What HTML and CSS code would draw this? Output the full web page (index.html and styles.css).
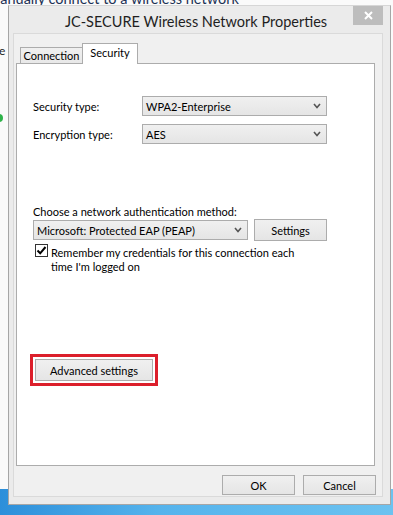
FILE: index.html
```html
<!DOCTYPE html>
<html lang="en">
<head>
    <meta charset="UTF-8">
    <title>JC-SECURE Wireless Network Properties</title>
    <link rel="stylesheet" href="styles.css">
</head>
<body>
    <!-- Window behind the dialog -->
    <div class="backwin">
        <p class="back-title">Manually connect to a wireless network</p>
        <p class="back-label">e</p>
        <span class="back-dot"></span>
    </div>

    <!-- Properties dialog -->
    <div class="dialog">
        <div class="titlebar">
            <span class="title">JC-SECURE Wireless Network Properties</span>
            <span class="close">
                <svg width="9" height="9" viewBox="0 0 9 9"><path d="M1 1 L8 8 M8 1 L1 8" stroke="#fff" stroke-width="2" fill="none"/></svg>
            </span>
        </div>

        <div class="client">
            <div class="tabs">
                <div class="tab">Connection</div>
                <div class="tab active">Security</div>
            </div>

            <div class="panel">
                <div class="field">
                    <span class="field-label">Security type:</span>
                    <div class="combo">
                        <span>WPA2-Enterprise</span>
                        <svg class="chev" width="8" height="6" viewBox="0 0 8 6"><path d="M1 1 L4 4.5 L7 1" stroke="#555" stroke-width="1.6" fill="none"/></svg>
                    </div>
                </div>
                <div class="field">
                    <span class="field-label">Encryption type:</span>
                    <div class="combo">
                        <span>AES</span>
                        <svg class="chev" width="8" height="6" viewBox="0 0 8 6"><path d="M1 1 L4 4.5 L7 1" stroke="#555" stroke-width="1.6" fill="none"/></svg>
                    </div>
                </div>

                <p class="auth-label">Choose a network authentication method:</p>
                <div class="auth-row">
                    <div class="combo combo-auth">
                        <span>Microsoft: Protected EAP (PEAP)</span>
                        <svg class="chev" width="8" height="6" viewBox="0 0 8 6"><path d="M1 1 L4 4.5 L7 1" stroke="#555" stroke-width="1.6" fill="none"/></svg>
                    </div>
                    <button class="btn btn-settings">Settings</button>
                </div>

                <div class="check-row">
                    <span class="checkbox">
                        <svg width="11" height="11" viewBox="0 0 11 11"><path d="M1.5 5.5 L4.2 8.3 L9.5 2" stroke="#000" stroke-width="2" fill="none"/></svg>
                    </span>
                    <span class="check-text">Remember my credentials for this connection each<br>time I'm logged on</span>
                </div>

                <div class="highlight">
                    <button class="btn btn-advanced">Advanced settings</button>
                </div>
            </div>

            <div class="actions">
                <button class="btn btn-action">OK</button>
                <button class="btn btn-action">Cancel</button>
            </div>
        </div>
    </div>
</body>
</html>
```

FILE: styles.css
```css
* {
    box-sizing: border-box;
}

body {
    margin: 0;
    width: 393px;
    height: 515px;
    overflow: hidden;
    position: relative;
    font-family: "Segoe UI", Lato, "Noto Sans", sans-serif;
    font-size: 11px;
    color: #000;
    background: linear-gradient(to right, #2d8fda, #55b3ec 40%, #6cc2f0); /* desktop blue */
}

/* Background window */
.backwin {
    height: 489px;
    background: #fafafa;
    overflow: hidden;
}

.back-title {
    margin: -11px 0 0 -13px;
    font-size: 14.5px;
    line-height: 20px;
    color: #1d3256;
    white-space: nowrap;
}

.back-label {
    margin: 34px 0 0 -1px;
    font-size: 12px;
    line-height: 15px;
    color: #222;
}

.back-dot {
    display: block;
    width: 8px;
    height: 8px;
    margin: 56px 0 0 -5px;
    border-radius: 50%;
    background: #2fb34a;
}

/* Dialog frame */
.dialog {
    position: absolute;
    left: 8px;
    top: 5px;
    width: 383px;
    height: 500px;
    background: #ebebeb;
    border: 1px solid #a6a6a6;
    border-top-color: #d6d6d6;
    display: flex;
    flex-direction: column;
}

.titlebar {
    height: 27px;
    position: relative;
    display: flex;
    align-items: center;
    justify-content: center;
    padding: 3px 7px 0 0;
}

.title {
    font-size: 14.5px;
    color: #1f1f1f;
    white-space: nowrap;
}

.close {
    position: absolute;
    top: 0;
    right: 7px;
    width: 30px;
    height: 19px;
    background: #bdbdbd;
    display: flex;
    align-items: center;
    justify-content: center;
}

.client {
    flex: 1;
    margin: 0 7px 7px 4px;
    background: #f0f0f0;
    border: 1px solid #dadada;
    padding: 9px 6px 0 2px;
}

/* Tabs */
.tabs {
    display: flex;
    align-items: flex-end;
    height: 20px;
    margin-left: 4px;
}

.tab {
    height: 16px;
    width: 63px;
    border: 1px solid #acacac;
    border-bottom: none;
    background: linear-gradient(#f0f0f0, #e8e8e8);
    text-align: center;
    line-height: 16px;
}

.tab.active {
    position: relative;
    z-index: 1;
    width: 56px;
    height: 21px;
    margin: 0 0 -1px -1px;
    background: #fff;
    line-height: 17px;
}

.panel {
    height: 403px;
    margin-right: 1px;
    background: #fff;
    border: 1px solid #acacac;
    padding: 32px 16px 0;
}

/* Form rows */
.field {
    display: flex;
    align-items: center;
    height: 20px;
}

.field + .field {
    margin-top: 8px;
}

.field-label {
    width: 109px;
}

.combo {
    width: 185px;
    height: 20px;
    border: 1px solid #acacac;
    background: linear-gradient(#f0f0f0, #e5e5e5);
    display: flex;
    align-items: center;
    justify-content: space-between;
    padding: 0 5px 0 3px;
    white-space: nowrap;
}

.combo-auth {
    width: 215px;
}

.auth-label {
    margin: 60px 0 0;
    line-height: 15px;
}

.auth-row {
    display: flex;
    align-items: center;
    gap: 6px;
    height: 22px;
}

.btn {
    font-family: inherit;
    font-size: 11px;
    color: #000;
    border: 1px solid #acacac;
    background: linear-gradient(#f0f0f0, #e5e5e5);
    padding: 0;
    margin: 0;
}

.btn-settings {
    width: 73px;
    height: 22px;
}

.check-row {
    display: flex;
    align-items: flex-start;
    margin-top: 3px;
}

.checkbox {
    flex: none;
    width: 13px;
    height: 13px;
    margin-left: 2px;
    border: 1px solid #333;
    background: #fff;
    display: flex;
    align-items: center;
    justify-content: center;
}

.check-text {
    margin-left: 3px;
    padding-top: 2px;
    line-height: 14px;
    white-space: nowrap;
}

/* Red annotation round the button */
.highlight {
    width: 128px;
    margin: 80px 0 0 -3px;
    border: 3px solid #dc1f2b;
    padding: 2px;
}

.btn-advanced {
    display: block;
    width: 118px;
    height: 22px;
}

.actions {
    display: flex;
    justify-content: flex-end;
    gap: 8px;
    margin-top: 9px;
}

.btn-action {
    width: 73px;
    height: 20px;
}
```
